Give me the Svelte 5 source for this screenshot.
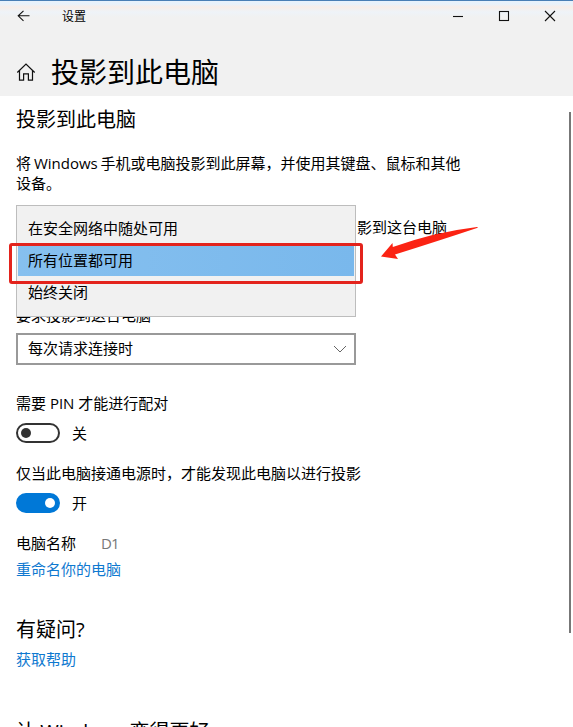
<script lang="ts">
  interface Option {
    id: string;
    label: string;
  }

  const options: Option[] = [
    { id: 'secure', label: '在安全网络中随处可用' },
    { id: 'everywhere', label: '所有位置都可用' },
    { id: 'off', label: '始终关闭' },
  ];

  let selected = $state('everywhere');
  let requirePin = $state(false);
  let onlyPluggedIn = $state(true);
</script>

{#snippet toggle(on: boolean, flip: () => void)}
  <div class="toggle-row">
    <button class="toggle" class:on role="switch" aria-checked={on} aria-label="开关" onclick={flip}>
      <span class="knob"></span>
    </button>
    <span>{on ? '开' : '关'}</span>
  </div>
{/snippet}

<div class="window">
  <header>
    <div class="titlebar">
      <svg class="back" width="14" height="12" viewBox="0 0 14 12">
        <path d="M6.5 0.8 L1.2 5.8 L6.5 10.8 M1.2 5.8 H12.5" />
      </svg>
      <span class="app-name">设置</span>
      <div class="controls">
        <svg width="12" height="12" viewBox="0 0 12 12"><path d="M1 6.5 H11" /></svg>
        <svg width="12" height="12" viewBox="0 0 12 12"><rect x="1.5" y="1.5" width="9" height="9" /></svg>
        <svg width="12" height="12" viewBox="0 0 12 12"><path d="M1 1 L11 11 M11 1 L1 11" /></svg>
      </div>
    </div>
    <div class="page-title">
      <svg width="20" height="20" viewBox="0 0 20 20">
        <path d="M1.3 10.5 L10 2 L18.7 10.5 M3.5 8.7 V18.2 H7.6 V11.8 H12.4 V18.2 H16.5 V8.7" />
      </svg>
      <h1>投影到此电脑</h1>
    </div>
  </header>

  <main>
    <h2>投影到此电脑</h2>
    <p class="intro">将 Windows 手机或电脑投影到此屏幕，并使用其键盘、鼠标和其他设备。</p>

    <div class="availability">
      <div class="label-end">影到这台电脑</div>
      <div class="menu">
        {#each options as option (option.id)}
          <button class="option" class:selected={option.id === selected} onclick={() => (selected = option.id)}>
            {option.label}
          </button>
        {/each}
      </div>
      <div class="highlight"></div>
      <svg class="arrow" width="100" height="38" viewBox="0 0 100 38">
        <path d="M1 33.5 L12.5 20 L12.8 24 Q55 9 97 4 Q99 4 97 5 Q58 18 15 31.5 L18 36 Z" />
      </svg>
    </div>

    <div class="ask">要求投影到这台电脑</div>
    <div class="select">
      <span>每次请求连接时</span>
      <svg width="14" height="8" viewBox="0 0 14 8"><path d="M1 1 L7 7 L13 1" /></svg>
    </div>

    <div class="pin">需要 PIN 才能进行配对</div>
    {@render toggle(requirePin, () => (requirePin = !requirePin))}

    <div class="power">仅当此电脑接通电源时，才能发现此电脑以进行投影</div>
    {@render toggle(onlyPluggedIn, () => (onlyPluggedIn = !onlyPluggedIn))}

    <div class="pc-name">
      <span>电脑名称</span>
      <span class="value">D1</span>
    </div>
    <a href="#rename">重命名你的电脑</a>

    <h2 class="question">有疑问?</h2>
    <a href="#help">获取帮助</a>

    <h2 class="feedback">让 Windows 变得更好</h2>
    <div class="scrollbar"></div>
  </main>
</div>

<style>
  :global(body) {
    margin: 0;
    overflow: hidden;
  }

  .window {
    box-sizing: border-box;
    height: 727px;
    overflow: hidden;
    display: flex;
    flex-direction: column;
    background: #fff;
    color: #000;
    font: 15px/20px 'Open Sans', 'Noto Sans CJK SC', sans-serif;
  }

  header {
    box-sizing: border-box;
    height: 96px;
    flex-shrink: 0;
    border-top: 1px solid #4a7fb5;
    background: linear-gradient(#e9f2fb 0 3px, #f8eee8 6px, #eef3f8 11px, #f1f1f1 16px);
  }

  svg {
    fill: none;
    stroke: #111;
    stroke-width: 1.1;
  }

  .titlebar {
    height: 30px;
    display: flex;
    align-items: center;
    padding: 0 17px;
  }

  .app-name {
    margin: 2px 0 0 31px;
    font-size: 12px;
  }

  .controls {
    display: flex;
    gap: 34px;
    margin-left: auto;
  }

  .page-title {
    display: flex;
    align-items: center;
    gap: 15px;
    height: 56px;
    margin-top: 13px;
    padding: 0 16px;
  }

  .page-title svg {
    stroke-width: 1.2;
  }

  h1 {
    margin: 0;
    font-size: 28px;
    line-height: 40px;
    font-weight: 400;
  }

  main {
    position: relative;
    flex: 1;
    padding: 10px 16px 0;
  }

  h2 {
    margin: 0;
    font-size: 20px;
    line-height: 28px;
    font-weight: 400;
  }

  .intro {
    width: 450px;
    margin: 19px 0 0;
    word-spacing: -1px;
  }

  .availability {
    position: relative;
    height: 112px;
    margin-top: 12px;
  }

  .label-end {
    width: 431px;
    padding-top: 12px;
    text-align: right;
  }

  .menu {
    position: absolute;
    top: 0;
    left: 0;
    box-sizing: border-box;
    width: 340px;
    height: 112px;
    padding: 7px 1px;
    display: flex;
    flex-direction: column;
    background: #f1f1f1;
    border: 1px solid #bdbdbd;
  }

  .option {
    height: 32px;
    padding: 0 10px 2px;
    border: 0;
    background: none;
    color: #000;
    font: inherit;
    text-align: left;
  }

  .option.selected {
    height: 31px;
    margin-bottom: 1px;
    background: linear-gradient(90deg, #86c0ef, #79b8ec);
  }

  .highlight {
    position: absolute;
    top: 38px;
    left: -7px;
    box-sizing: border-box;
    width: 354px;
    height: 41px;
    border: 3px solid #e3231c;
    border-radius: 3px;
  }

  .arrow {
    position: absolute;
    top: 18px;
    left: 364px;
  }

  .arrow path {
    fill: #fb2313;
    stroke: none;
  }

  .ask {
    margin-top: -12px;
  }

  .select {
    box-sizing: border-box;
    width: 340px;
    height: 32px;
    margin-top: 8px;
    padding: 0 7px 2px 10px;
    display: flex;
    align-items: center;
    justify-content: space-between;
    border: 2px solid #999;
  }

  .select svg {
    margin-top: 1px;
    stroke: #666;
    stroke-width: 1;
  }

  .pin {
    margin-top: 28px;
  }

  .toggle-row {
    display: flex;
    align-items: center;
    gap: 12px;
    height: 20px;
    margin-top: 10px;
  }

  .toggle {
    box-sizing: border-box;
    width: 44px;
    height: 20px;
    padding: 0 3px;
    display: flex;
    align-items: center;
    border: 2px solid #333;
    border-radius: 10px;
    background: #fff;
  }

  .knob {
    width: 10px;
    height: 10px;
    border-radius: 50%;
    background: #333;
  }

  .toggle.on {
    justify-content: flex-end;
    border-color: #0078d7;
    background: #0078d7;
  }

  .toggle.on .knob {
    background: #fff;
  }

  .power {
    margin-top: 20px;
  }

  .pc-name {
    display: flex;
    gap: 25px;
    margin-top: 20px;
  }

  .value {
    color: #777;
    letter-spacing: -0.8px;
  }

  a {
    display: block;
    margin-top: 6px;
    color: #0f79d0;
    text-decoration: none;
  }

  .question {
    margin-top: 37px;
  }

  .question + a {
    margin-top: 5px;
  }

  .feedback {
    margin-top: 49px;
    word-spacing: -1px;
    white-space: nowrap;
  }

  /* overlay scrollbar thumb */
  .scrollbar {
    position: absolute;
    top: 16px;
    right: 2px;
    width: 2px;
    height: 521px;
    background: #777;
  }
</style>
